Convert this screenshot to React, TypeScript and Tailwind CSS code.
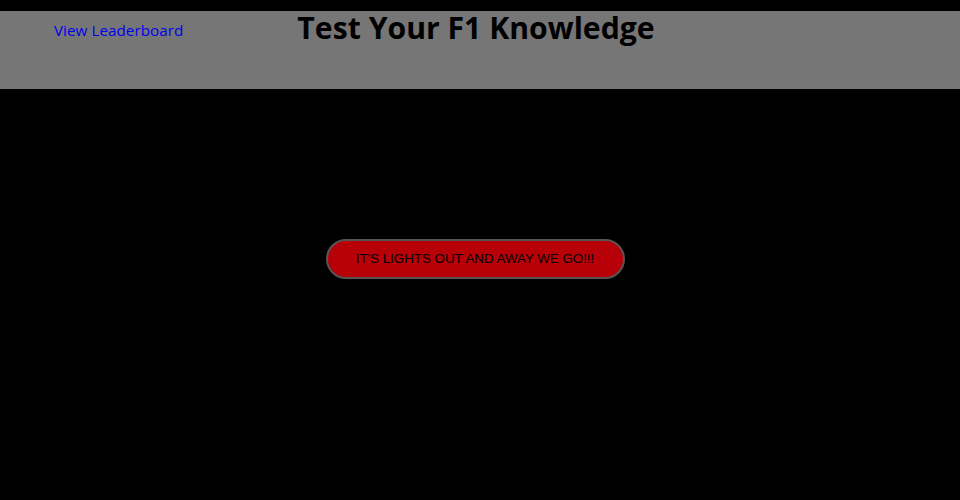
export default function App() {
  return (
    <div className="min-h-[500px] bg-black pt-[11px]">
      <header className="flex h-[78px] items-start bg-[#767676] font-['Open_Sans',sans-serif]">
        <a href="#" className="ml-[54px] mt-[9px] text-[15.3px] leading-[20px] text-[#0000ee]">
          View Leaderboard
        </a>
        <h1 className="ml-[114px] mt-[-2px] text-[30.2px] font-bold leading-[38px] text-black">
          Test Your F1 Knowledge
        </h1>
      </header>
      <main className="flex justify-center pt-[150px]">
        <button
          type="button"
          className="ml-[-10px] h-[40px] w-[299px] rounded-full border-2 border-[#555] bg-[#b80008] font-['Liberation_Sans',Arial,sans-serif] text-[13.33px] text-black"
        >
          IT'S LIGHTS OUT AND AWAY WE GO!!!
        </button>
      </main>
    </div>
  )
}
